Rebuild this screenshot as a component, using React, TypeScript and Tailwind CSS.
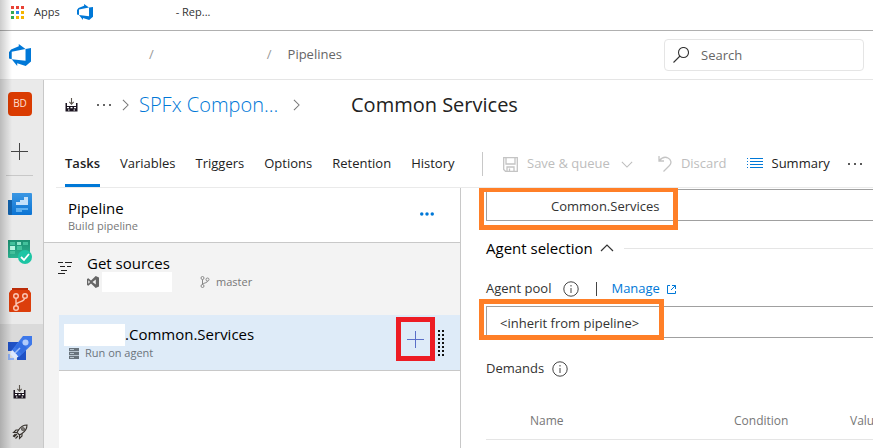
import React from "react";

type IconProps = { className?: string };

function DevOpsLogo({ className }: IconProps) {
  return (
    <svg viewBox="0 0 24 24" className={className} fill="#0078d7" aria-hidden="true">
      <path d="M0 8.877L2.247 5.91l8.405-3.416V.022l7.37 5.393L2.966 8.338v8.225L0 15.707zm24-4.45v14.651l-5.753 4.9-9.303-3.057v3.056l-5.978-7.416 15.057 1.798V5.415z" />
    </svg>
  );
}

function AppsIcon() {
  const colours = ["#e94235", "#e94235", "#e94235", "#34a853", "#2a86f0", "#f4b400", "#34a853", "#f4b400", "#f4b400"];
  return (
    <svg viewBox="0 0 13 13" className="h-[13px] w-[13px]" shapeRendering="crispEdges" aria-hidden="true">
      {colours.map((c, i) => (
        <rect key={i} x={(i % 3) * 5} y={Math.floor(i / 3) * 5} width="3" height="3" fill={c} />
      ))}
    </svg>
  );
}

function BuildIcon() {
  return (
    <svg viewBox="0 0 13 14" className="h-[14px] w-[13px]" aria-hidden="true">
      <path d="M0.5 5v8.5h12V5h-1.500v3H2V5z" fill="#1b1420" />
      <path d="M2 8h9v5H2z" fill="#1b1420" />
      <path d="M6.500 0v6M4.300 3.800l2.200 2.300 2.200-2.300" fill="none" stroke="#5c564e" strokeWidth="1.100" />
      <path d="M3 7h1v1H3zM6 7h1v1H6zM9 7h1v1H9zM2 9h2v1.300H2zM5.500 9h2v1.300h-2zM9 9h2v1.300H9zM3 11.500h1.500v1H3zM8.500 11.500H10v1H8.500z" fill="#fff" />
    </svg>
  );
}

function OverviewIcon() {
  return (
    <svg viewBox="0 0 24 22" className="h-[22px] w-6" aria-hidden="true">
      <defs>
        <linearGradient id="ov" x1="0" y1="0" x2="0" y2="1">
          <stop offset="0" stopColor="#3b97e3" />
          <stop offset="1" stopColor="#0b74d4" />
        </linearGradient>
      </defs>
      <path d="M0 7h4v15H1a1 1 0 0 1-1-1z" fill="#1263ad" />
      <path d="M4 0h19a1 1 0 0 1 1 1v20a1 1 0 0 1-1 1H4z" fill="url(#ov)" />
      <path d="M8 9h4V7h4V4h4v8H8z" fill="#c4e1fa" />
      <path d="M8 15h12v2h-6v2H8z" fill="#5fb0f0" />
    </svg>
  );
}

function BoardsIcon() {
  return (
    <svg viewBox="0 0 24 24" className="h-6 w-6" aria-hidden="true">
      <defs>
        <linearGradient id="bo" x1="0" y1="0" x2="0" y2="1">
          <stop offset="0" stopColor="#1d9072" />
          <stop offset="1" stopColor="#2bb592" />
        </linearGradient>
      </defs>
      <path d="M0 0h22v18H1a1 1 0 0 1-1-1z" fill="url(#bo)" />
      <path d="M2 2h5v3H2zM15 2h5v3h-5zM9 6h5v4H9zM2 11h5v3H2z" fill="#43c19c" />
      <path d="M9 2h4v3H9z" fill="#8fe5ca" />
      <path d="M2 6h5v4H2z" fill="#b7f5e0" />
      <circle cx="17" cy="17" r="7" fill="#1dc5a4" />
      <path d="M13 17l3 3 5-6" fill="none" stroke="#fff" strokeWidth="1.800" />
    </svg>
  );
}

function ReposIcon() {
  return (
    <svg viewBox="0 0 22 24" className="h-6 w-[22px]" aria-hidden="true">
      <path d="M3 0h16v2H3z" fill="#bb2c08" />
      <path d="M2 2h18l2 3v18a1 1 0 0 1-1 1H1a1 1 0 0 1-1-1V5z" fill="#dc3e0b" />
      <g fill="none" stroke="#fbc7b5" strokeWidth="1.400">
        <circle cx="7" cy="8" r="2.300" />
        <circle cx="16" cy="8" r="2.300" />
        <circle cx="7" cy="20" r="2.300" />
        <path d="M7 10.300v7.400M15.500 10.300c0 4-8 3.200-8.500 6.500" />
      </g>
    </svg>
  );
}

function PipelinesIcon() {
  return (
    <svg viewBox="0 0 24 24" className="h-6 w-6" aria-hidden="true">
      <path d="M0 6h11L4 15H0zM9 19l9-6v11H9z" fill="#1f51c5" />
      <path d="M15 0h9v8.500L11 21l-7-7z" fill="#3d78ea" />
      <path d="M7 11l5-6 7 7-5.500 6z" fill="#2862d8" opacity=".55" />
      <circle cx="17.500" cy="6.500" r="3" fill="#b0cbfb" />
      <path d="M12 12L7 17" stroke="#9fbdf8" strokeWidth="1.500" />
      <path d="M0 18h2v4h4v2H0z" fill="#8fb0f3" />
      <path d="M4 14l6.500 6.500L7 23l-5-5z" fill="#dce8ff" />
    </svg>
  );
}

function RocketIcon() {
  return (
    <svg viewBox="0 0 16 16" className="h-4 w-4" fill="none" stroke="#37322d" strokeWidth="1.100" aria-hidden="true">
      <path d="M15 1c-4 0-6.500 2-8.500 5L5 8.500 7.500 11 10 9.500c3-2 5-4.500 5-8.500z" />
      <path d="M6.500 6H4L1.500 8.500 5 8.500M10 9.500V12l-2.500 2.500V11" />
      <circle cx="11" cy="5" r="1.300" />
      <path d="M5 10l-3 3M6 12l-2.500 2.500M3.500 10L1 12.500" />
    </svg>
  );
}

function Chevron({ className, dir = "right" }: IconProps & { dir?: "right" | "down" | "up" }) {
  const right = dir === "right";
  const d = right ? "M1 1l6 6-6 6" : dir === "down" ? "M1 1l6 6 6-6" : "M1 7l6-6 6 6";
  return (
    <svg
      viewBox={right ? "0 0 8 14" : "0 0 14 8"}
      className={className}
      fill="none"
      stroke="currentColor"
      strokeWidth="1.200"
      aria-hidden="true"
    >
      <path d={d} />
    </svg>
  );
}

function Dots({ className, r = 1 }: IconProps & { r?: number }) {
  return (
    <svg viewBox="0 0 16 4" className={className} fill="currentColor" aria-hidden="true">
      <circle cx="2" cy="2" r={r} />
      <circle cx="8" cy="2" r={r} />
      <circle cx="14" cy="2" r={r} />
    </svg>
  );
}

function Info() {
  return (
    <svg viewBox="0 0 16 16" className="h-4 w-4 text-[#444]" fill="none" stroke="currentColor" aria-hidden="true">
      <circle cx="8" cy="8" r="7.200" />
      <path d="M8 7v5M8 4v1.500" />
    </svg>
  );
}

function SaveIcon() {
  return (
    <svg viewBox="0 0 15 15" className="h-[15px] w-[15px]" fill="none" stroke="#c4c4c4" strokeWidth="1.300" aria-hidden="true">
      <path d="M.7.700h13.600v13.600H2.500L.7 12.500zM3 1v6h9V1M4 14v-4h7v4M6.500 11.500V14" />
    </svg>
  );
}

function UndoIcon() {
  return (
    <svg viewBox="0 0 14 16" className="h-4 w-[14px]" fill="none" stroke="#c4c4c4" strokeWidth="1.300" aria-hidden="true">
      <path d="M1 0v5h5M1.200 4.800C3.500 2 7 .5 10 2s4 5 1.500 7.500L5.500 15.500" />
    </svg>
  );
}

function ListIcon() {
  return (
    <svg viewBox="0 0 16 12" className="h-3 w-4" fill="#0078d7" shapeRendering="crispEdges" aria-hidden="true">
      <path d="M3 0h13v1H3zM3 3h13v1H3zM3 6h13v1H3zM3 9h13v1H3zM0 0h1v1H0zM0 3h1v1H0zM0 6h1v1H0zM0 9h1v1H0z" />
    </svg>
  );
}

function SourcesIcon() {
  return (
    <svg viewBox="0 0 14 13" className="mt-[19px] h-[13px] w-[14px]" fill="#222" shapeRendering="crispEdges" aria-hidden="true">
      <path d="M0 0h5v1H0zM7 0h7v1H7zM2 4h5v1H2zM9 4h4v1H9zM3 8h6v1H3zM0 11h7v1H0z" />
    </svg>
  );
}

function VisualStudioIcon() {
  return (
    <svg viewBox="0 0 12 12" className="h-3 w-3" aria-hidden="true">
      <path d="M8.700 0L12 1.400v9.200L8.700 12 4 7.500 1.300 9.700 0 9V3l1.300-.7L4 4.500zM8.800 3.500L5.500 6l3.300 2.500zM1.300 4.300v3.400L3 6z" fill="#666" fillRule="evenodd" />
    </svg>
  );
}

function BranchIcon() {
  return (
    <svg viewBox="0 0 10 12" className="h-3 w-[10px]" fill="none" stroke="#888" strokeWidth="1" aria-hidden="true">
      <circle cx="2.500" cy="2" r="1.500" />
      <circle cx="7.500" cy="3.500" r="1.500" />
      <circle cx="2.500" cy="10" r="1.500" />
      <path d="M2.500 3.500v5M7.500 5c0 2.500-4.700 1.500-5 3.500" />
    </svg>
  );
}

function ServerIcon() {
  return (
    <svg viewBox="0 0 10 12" className="h-3 w-[10px]" shapeRendering="crispEdges" aria-hidden="true">
      <path d="M0 0h10v3H0zM0 4h10v3H0zM0 8h10v3H0z" fill="#68727b" />
      <path d="M1 1h4v1H1zM1 5h4v1H1zM1 9h4v1H1z" fill="#b8c4ce" />
      <path d="M0 3h10v1H0zM0 7h10v1H0z" fill="#b8c4ce" />
    </svg>
  );
}

function GripIcon() {
  return (
    <svg viewBox="0 0 7 28" className="h-7 w-[7px]" fill="#111" shapeRendering="crispEdges" aria-hidden="true">
      {[0, 1, 2, 3, 4, 5, 6].map((i) => (
        <path key={i} d={`M0 ${i * 4 + 1}h2v2H0zM4 ${i * 4 + 1}h2v2H4z`} />
      ))}
    </svg>
  );
}

function PlusIcon({ className }: IconProps) {
  return (
    <svg viewBox="0 0 17 17" className={className} stroke="currentColor" shapeRendering="crispEdges" aria-hidden="true">
      <path d="M8.500 0v17M0 8.500h17" />
    </svg>
  );
}

function Sidebar() {
  return (
    <nav className="flex w-11 shrink-0 flex-col border-r border-[#c8c8c8] bg-[#eaeaea]">
      <a href="#project" className="flex h-[47px] shrink-0 items-center pl-2">
        <span className="flex h-6 w-6 items-center justify-center rounded-sm bg-[#da3b01] text-[10px] text-[#ffe0d5]">BD</span>
      </a>
      <button aria-label="Add" className="flex h-12 shrink-0 items-center pl-[11px] text-[#444]">
        <PlusIcon className="h-[17px] w-[17px]" />
      </button>
      <div className="mb-1 ml-[6px] h-px w-[27px] shrink-0 bg-[#c8c8c8]" />
      <a href="#overview" aria-label="Overview" className="flex h-12 shrink-0 items-center pl-2"><OverviewIcon /></a>
      <a href="#boards" aria-label="Boards" className="flex h-12 shrink-0 items-center pl-2"><BoardsIcon /></a>
      <a href="#repos" aria-label="Repos" className="flex h-12 shrink-0 items-center pl-[9px]"><ReposIcon /></a>
      <div className="min-h-0 flex-1 bg-[#dadada]">
        <a href="#pipelines" aria-label="Pipelines" className="flex h-12 items-center pl-2"><PipelinesIcon /></a>
        <a href="#builds" aria-label="Builds" className="flex h-10 items-center pl-[13px]"><BuildIcon /></a>
        <a href="#releases" aria-label="Releases" className="flex h-10 items-center pl-3"><RocketIcon /></a>
      </div>
    </nav>
  );
}

function Toolbar() {
  const tabs = ["Variables", "Triggers", "Options", "Retention", "History"];
  return (
    <div className="ml-3 mt-[11px] flex h-[47px] shrink-0 items-stretch whitespace-nowrap border-b border-[#eaeaea] pl-[9px] text-[13px] text-[#222]">
      <div className="flex w-[417px] shrink-0 gap-5">
        <button className="border-y-[3px] border-b-[#0078d7] border-t-transparent font-semibold">Tasks</button>
        {tabs.map((t) => (
          <button key={t}>{t}</button>
        ))}
      </div>
      <div className="h-6 w-px shrink-0 self-center bg-[#c8c8c8]" />
      <button disabled className="ml-5 flex items-center gap-[9px] text-[#bdbdbd]">
        <SaveIcon />
        Save &amp; queue
        <Chevron dir="down" className="ml-[2px] h-[7px] w-3" />
      </button>
      <button disabled className="ml-[25px] flex items-center gap-[9px] text-[#bdbdbd]">
        <UndoIcon />
        Discard
      </button>
      <button className="ml-5 flex items-center gap-[9px]">
        <ListIcon />
        Summary
      </button>
      <button aria-label="More actions" className="ml-4 flex items-center">
        <Dots className="h-1 w-[18px]" />
      </button>
    </div>
  );
}

function PipelineTree() {
  return (
    <section className="flex w-[417px] shrink-0 flex-col border-r border-[#c8c8c8] bg-[#f3f3f3]">
      <div className="flex h-[55px] shrink-0 items-center justify-between border-b border-[#c8c8c8] bg-white pl-6 pr-[26px]">
        <div className="pt-[2px]">
          <h2 className="text-[15px] leading-5 text-black">Pipeline</h2>
          <p className="text-[11px] leading-4 text-[#777]">Build pipeline</p>
        </div>
        <button aria-label="Pipeline actions" className="pb-[3px] text-[#0078d7]">
          <Dots r={2} className="h-1 w-[14px]" />
        </button>
      </div>
      <div className="flex h-[72px] shrink-0 pl-[14px]">
        <SourcesIcon />
        <div className="ml-[15px] pt-[10px]">
          <h3 className="text-[15px] leading-5 text-black">Get sources</h3>
          <div className="-mt-px flex h-5 items-center text-[11px] text-[#777]">
            <VisualStudioIcon />
            <span className="ml-[3px] h-5 w-[70px] bg-white" />
            <span className="ml-7 mr-[6px]"><BranchIcon /></span>
            master
          </div>
        </div>
      </div>
      <div className="ml-[15px] flex-1 bg-white">
        <div className="flex h-14 items-center border-b border-[#c8c8c8] bg-[#deebf8] pl-[5px]">
          <div className="flex-1">
            <h3 className="flex h-[22px] items-center text-[15px] text-black">
              <span className="h-[22px] w-[61px] bg-white" />
              .Common.Services
            </h3>
            <p className="flex h-4 items-center gap-[6px] pl-[5px] text-[11px] text-[#6c747c]">
              <ServerIcon />
              Run on agent
            </p>
          </div>
          <button aria-label="Add a task" className="mb-[9px] mr-[3px] flex h-11 w-[39px] items-center justify-center self-end border-[5px] border-[#ed1c24] text-[#5a6fc8]">
            <PlusIcon className="h-[17px] w-[17px]" />
          </button>
          <div className="mr-[15px]"><GripIcon /></div>
        </div>
      </div>
    </section>
  );
}

function AgentDetails() {
  return (
    <section className="min-w-0 flex-1 overflow-hidden pl-[25px] text-[13px] text-[#333]">
      <div className="relative pt-px">
        <input
          aria-label="Display name"
          defaultValue="Common.Services"
          className="block h-8 w-[calc(100%+8px)] border border-[#a0a0a0] bg-white pl-16 pt-[2px] text-[#333]"
        />
        <div className="pointer-events-none absolute -left-[7px] -top-px h-[43px] w-[199px] border-[5px] border-[#ff7f27]" />
      </div>
      <div className="mt-[17px] flex h-5 items-center">
        <button className="flex items-center gap-[7px] text-[15px] text-black">
          Agent selection
          <Chevron dir="up" className="h-[8px] w-[14px] text-[#333]" />
        </button>
        <div className="ml-[10px] h-px flex-1 bg-[#e5e5e5]" />
      </div>
      <div className="mt-[21px] flex h-5 items-center">
        <label htmlFor="pool">Agent pool</label>
        <span className="ml-3"><Info /></span>
        <span className="ml-[17px] h-[14px] w-px bg-[#444]" />
        <a href="#manage" className="ml-[14px] flex items-center gap-[7px] text-[#0078d7]">
          Manage
          <svg viewBox="0 0 9 9" className="h-[9px] w-[9px]" fill="none" stroke="currentColor" aria-hidden="true">
            <path d="M3 .500H.500v8h8V6M5 .500h3.500V4M8.500.500L4 5" />
          </svg>
        </a>
      </div>
      <div className="relative mt-[7px]">
        <select id="pool" className="block h-8 w-[calc(100%+8px)] appearance-none border border-[#a0a0a0] bg-white pl-[13px] pt-[3px] text-[#333]">
          <option>&lt;inherit from pipeline&gt;</option>
        </select>
        <div className="pointer-events-none absolute -left-[7px] -top-[7px] h-[41px] w-[185px] border-[5px] border-[#ff7f27]" />
      </div>
      <div className="mt-[21px] flex h-5 items-center gap-2">
        Demands
        <Info />
      </div>
      <table className="mt-[21px] w-[480px] table-fixed border-collapse text-left text-[12px] text-[#777]">
        <thead>
          <tr className="h-[39px] border-b border-[#e5e5e5]">
            <th className="w-[248px] pl-11 pt-[3px] font-normal">Name</th>
            <th className="w-[116px] pt-[3px] font-normal">Condition</th>
            <th className="pt-[3px] font-normal">Value</th>
          </tr>
        </thead>
      </table>
    </section>
  );
}

export default function App() {
  return (
    <div className="relative flex h-screen flex-col overflow-hidden bg-white font-['Open_Sans','Noto_Sans',sans-serif]">
      <div className="flex h-[31px] shrink-0 items-center border-b border-[#b0b0b0] pb-[6px] pl-[11px] text-[11px] text-[#333]">
        <a href="#apps" className="flex items-center gap-[10px]">
          <AppsIcon />
          Apps
        </a>
        <a href="#bookmark" className="ml-[17px] flex items-center">
          <DevOpsLogo className="h-4 w-4" />
          <span className="ml-[83px]">- Rep...</span>
        </a>
      </div>
      <header className="flex h-[49px] shrink-0 items-center border-b border-[#e5e5e5] pl-[9px] pr-[9px] text-[13px] text-[#666]">
        <a href="#home" aria-label="Home"><DevOpsLogo className="h-[22px] w-[22px]" /></a>
        <span className="ml-[118px] text-[#999]">/</span>
        <span className="ml-[113px] text-[#999]">/</span>
        <a href="#pipelines" className="ml-4">Pipelines</a>
        <label className="ml-auto flex h-8 w-[200px] items-center gap-3 rounded-sm border border-[#e5e5e5] pl-2">
          <svg viewBox="0 0 16 16" className="h-4 w-4 shrink-0" fill="none" stroke="#333" strokeWidth="1.100" aria-hidden="true">
            <circle cx="10.500" cy="5.500" r="5" />
            <path d="M7 9L.5 15.500" />
          </svg>
          <input type="search" aria-label="Search" placeholder="Search" className="min-w-0 flex-1 pt-[2px] outline-none placeholder:text-[#666]" />
        </label>
      </header>
      <div className="flex min-h-0 flex-1">
        <Sidebar />
        <main className="flex min-w-0 flex-1 flex-col">
          <div className="flex h-[50px] shrink-0 items-center whitespace-nowrap pl-[21px] text-[20px] text-[#222]">
            <BuildIcon />
            <button aria-label="Show path" className="ml-[18px] text-[#333]"><Dots className="h-1 w-4" /></button>
            <Chevron className="ml-[10px] h-3 w-[7px] text-[#777]" />
            <a href="#folder" className="ml-[10px] w-[145px] font-light text-[#0078d7]">SPFx Compon...</a>
            <Chevron className="ml-[9px] h-3 w-[7px] text-[#777]" />
            <h1 className="ml-[51px]">Common Services</h1>
          </div>
          <Toolbar />
          <div className="flex min-h-0 flex-1">
            <PipelineTree />
            <AgentDetails />
          </div>
        </main>
      </div>
      <div className="pointer-events-none absolute inset-y-0 left-0 w-3 bg-linear-to-r from-black/20 to-transparent" />
    </div>
  );
}
